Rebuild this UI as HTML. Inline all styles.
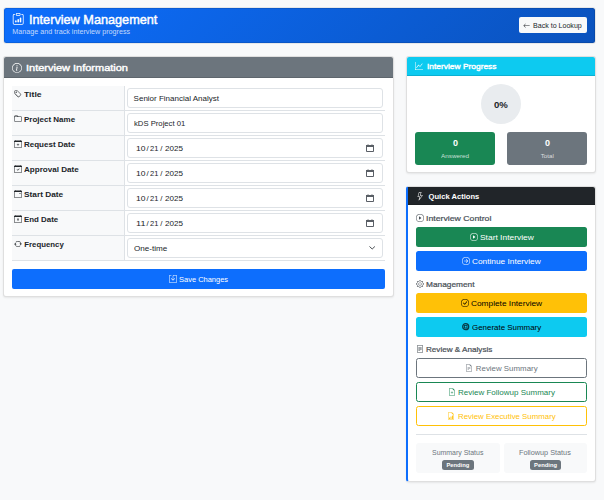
<!DOCTYPE html>
<html><head><meta charset="utf-8">
<style>
*{box-sizing:border-box;margin:0;padding:0}
html,body{width:604px;height:500px;overflow:hidden}
body{background:#f8f9fa;font-family:"Liberation Sans",sans-serif;color:#212529;position:relative}
.abs{position:absolute}
.t{position:absolute;white-space:nowrap;line-height:1;transform-origin:0 0}
svg{display:block;overflow:visible}
</style></head><body>
<div class="abs" style="left:3px;top:7px;width:593px;height:37px;background:rgba(0,0,0,.07);border-radius:3.5px"></div>
<div class="abs" style="left:4px;top:8px;width:591px;height:35px;border-radius:2.5px;background:linear-gradient(135deg,#0d6efd 0%,#0a52bd 100%);box-shadow:inset 0 0 0 1px rgba(0,0,0,.1)"></div>
<svg class="abs" style="left:11.7px;top:13px" width="12.4" height="11.8" viewBox="0 0 16 16" preserveAspectRatio="none"><path fill="#fff" d="M4 11a1 1 0 1 1 2 0v1a1 1 0 1 1-2 0zm6-4a1 1 0 1 1 2 0v5a1 1 0 1 1-2 0zM7 9a1 1 0 0 1 2 0v3a1 1 0 1 1-2 0zM4 1.5H3a2 2 0 0 0-2 2V14a2 2 0 0 0 2 2h10a2 2 0 0 0 2-2V3.5a2 2 0 0 0-2-2h-1v1h1a1 1 0 0 1 1 1V14a1 1 0 0 1-1 1H3a1 1 0 0 1-1-1V3.5a1 1 0 0 1 1-1h1zM9.5 1a.5.5 0 0 1 .5.5v1a.5.5 0 0 1-.5.5h-3a.5.5 0 0 1-.5-.5v-1a.5.5 0 0 1 .5-.5zm-3-1A1.5 1.5 0 0 0 5 1.5v1A1.5 1.5 0 0 0 6.5 4h3A1.5 1.5 0 0 0 11 2.5v-1A1.5 1.5 0 0 0 9.5 0z"/></svg>
<div class="t" style="left:28.70px;top:13px;font-size:13px;color:#fff;transform:scaleX(0.9763);-webkit-text-stroke:.45px #fff">Interview Management</div>
<div class="t" style="left:12.30px;top:28px;font-size:7.2px;color:rgba(255,255,255,.75);">Manage and track interview progress</div>
<div class="abs" style="left:519px;top:17px;width:68px;height:16px;background:#f8f9fa;border-radius:2px"></div>
<svg class="abs" style="left:523.4px;top:21.9px;" width="7.2" height="7.2" viewBox="0 0 16 16"><path fill="#212529" d="M15 8a.5.5 0 0 0-.5-.5H2.707l3.147-3.146a.5.5 0 1 0-.708-.708l-4 4a.5.5 0 0 0 0 .708l4 4a.5.5 0 0 0 .708-.708L2.707 8.5H14.5A.5.5 0 0 0 15 8"/></svg>
<div class="t" style="left:533.20px;top:22px;font-size:7.2px;color:#212529;transform:scaleX(0.9846);">Back to Lookup</div>
<div class="abs" style="left:3px;top:56px;width:391px;height:241px;background:#fff;border:1px solid rgba(0,0,0,.125);border-radius:3px;box-shadow:0 1px 2px rgba(0,0,0,.075);"></div>
<div class="abs" style="left:4px;top:57px;width:389px;height:21px;background:#6c757d;border-bottom:1px solid rgba(0,0,0,.125);border-radius:2px 2px 0 0"></div>
<svg class="abs" style="left:12px;top:63px;" width="10" height="10" viewBox="0 0 16 16"><path fill="#fff" d="M8 15A7 7 0 1 1 8 1a7 7 0 0 1 0 14m0 1A8 8 0 1 0 8 0a8 8 0 0 0 0 16M8.93 6.588l-2.29.287-.082.38.45.083c.294.07.352.176.288.469l-.738 3.468c-.194.897.105 1.319.808 1.319.545 0 1.178-.252 1.465-.598l.088-.416c-.2.176-.492.246-.686.246-.275 0-.375-.193-.304-.533L8.93 6.588zM9 4.5a1 1 0 1 1-2 0 1 1 0 0 1 2 0"/></svg>
<div class="t" style="left:26.00px;top:63px;font-size:9.4px;color:#fff;transform:scaleX(1.1720);-webkit-text-stroke:.4px #fff">Interview Information</div>
<div class="abs" style="left:12px;top:86px;width:373px;height:175px;background:#fff"></div>
<div class="abs" style="left:12px;top:86px;width:112px;height:24px;background:#f8f9fa"></div>
<div class="abs" style="left:12px;top:110px;width:373px;height:1px;background:#dee2e6"></div>
<div class="abs" style="left:12px;top:111px;width:112px;height:24px;background:#f8f9fa"></div>
<div class="abs" style="left:12px;top:135px;width:373px;height:1px;background:#dee2e6"></div>
<div class="abs" style="left:12px;top:136px;width:112px;height:24px;background:#f8f9fa"></div>
<div class="abs" style="left:12px;top:160px;width:373px;height:1px;background:#dee2e6"></div>
<div class="abs" style="left:12px;top:161px;width:112px;height:24px;background:#f8f9fa"></div>
<div class="abs" style="left:12px;top:185px;width:373px;height:1px;background:#dee2e6"></div>
<div class="abs" style="left:12px;top:186px;width:112px;height:24px;background:#f8f9fa"></div>
<div class="abs" style="left:12px;top:210px;width:373px;height:1px;background:#dee2e6"></div>
<div class="abs" style="left:12px;top:211px;width:112px;height:24px;background:#f8f9fa"></div>
<div class="abs" style="left:12px;top:235px;width:373px;height:1px;background:#dee2e6"></div>
<div class="abs" style="left:12px;top:236px;width:112px;height:24px;background:#f8f9fa"></div>
<div class="abs" style="left:12px;top:260px;width:373px;height:1px;background:#dee2e6"></div>
<div class="abs" style="left:124px;top:86px;width:1px;height:175px;background:#dee2e6"></div>
<svg class="abs" style="left:14px;top:90px;" width="8" height="8" viewBox="0 0 16 16"><path fill="#212529" d="M6 4.5a1.5 1.5 0 1 1-3 0 1.5 1.5 0 0 1 3 0m-1 0a.5.5 0 1 0-1 0 .5.5 0 0 0 1 0M2 1h4.586a1 1 0 0 1 .707.293l7 7a1 1 0 0 1 0 1.414l-4.586 4.586a1 1 0 0 1-1.414 0l-7-7A1 1 0 0 1 1 6.586V2a1 1 0 0 1 1-1m0 5.586 7 7L13.586 9l-7-7H2z"/></svg>
<div class="t" style="left:24.30px;top:91px;font-size:7.8px;font-weight:bold;color:#212529;transform:scaleX(1.1076);">Title</div>
<svg class="abs" style="left:14px;top:115px;" width="8" height="8" viewBox="0 0 16 16"><path fill="#212529" d="M.54 3.87.5 3a2 2 0 0 1 2-2h3.672a2 2 0 0 1 1.414.586l.828.828A2 2 0 0 0 9.828 3h3.982a2 2 0 0 1 1.992 2.181l-.637 7A2 2 0 0 1 13.174 14H2.826a2 2 0 0 1-1.991-1.819l-.637-7a2 2 0 0 1 .342-1.31zM2.19 4a1 1 0 0 0-.996 1.09l.637 7a1 1 0 0 0 .995.91h10.348a1 1 0 0 0 .995-.91l.637-7A1 1 0 0 0 13.81 4zm4.69-1.707A1 1 0 0 0 6.172 2H2.5a1 1 0 0 0-1 .981l.006.139q.323-.119.684-.12h5.396z"/></svg>
<div class="t" style="left:24.30px;top:116px;font-size:7.8px;font-weight:bold;color:#212529;transform:scaleX(1.0252);">Project Name</div>
<svg class="abs" style="left:14px;top:140px;" width="8" height="8" viewBox="0 0 16 16"><path fill="#212529" d="M8 7a.5.5 0 0 1 .5.5V9H10a.5.5 0 0 1 0 1H8.5v1.5a.5.5 0 0 1-1 0V10H6a.5.5 0 0 1 0-1h1.5V7.5A.5.5 0 0 1 8 7M3.5 0a.5.5 0 0 1 .5.5V1h8V.5a.5.5 0 0 1 1 0V1h1a2 2 0 0 1 2 2v11a2 2 0 0 1-2 2H2a2 2 0 0 1-2-2V3a2 2 0 0 1 2-2h1V.5a.5.5 0 0 1 .5-.5M1 4v10a1 1 0 0 0 1 1h12a1 1 0 0 0 1-1V4z"/></svg>
<div class="t" style="left:24.30px;top:141px;font-size:7.8px;font-weight:bold;color:#212529;transform:scaleX(1.0255);">Request Date</div>
<svg class="abs" style="left:14px;top:165px;" width="8" height="8" viewBox="0 0 16 16"><path fill="#212529" d="M10.854 7.146a.5.5 0 0 1 0 .708l-3 3a.5.5 0 0 1-.708 0l-1.5-1.5a.5.5 0 1 1 .708-.708L7.5 9.793l2.646-2.647a.5.5 0 0 1 .708 0M3.5 0a.5.5 0 0 1 .5.5V1h8V.5a.5.5 0 0 1 1 0V1h1a2 2 0 0 1 2 2v11a2 2 0 0 1-2 2H2a2 2 0 0 1-2-2V3a2 2 0 0 1 2-2h1V.5a.5.5 0 0 1 .5-.5M1 4v10a1 1 0 0 0 1 1h12a1 1 0 0 0 1-1V4z"/></svg>
<div class="t" style="left:24.30px;top:166px;font-size:7.8px;font-weight:bold;color:#212529;transform:scaleX(1.0367);">Approval Date</div>
<svg class="abs" style="left:14px;top:190px;" width="8" height="8" viewBox="0 0 16 16"><path fill="#212529" d="M11 6.5a.5.5 0 0 1 .5-.5h1a.5.5 0 0 1 .5.5v1a.5.5 0 0 1-.5.5h-1a.5.5 0 0 1-.5-.5zM3.5 0a.5.5 0 0 1 .5.5V1h8V.5a.5.5 0 0 1 1 0V1h1a2 2 0 0 1 2 2v11a2 2 0 0 1-2 2H2a2 2 0 0 1-2-2V3a2 2 0 0 1 2-2h1V.5a.5.5 0 0 1 .5-.5M1 4v10a1 1 0 0 0 1 1h12a1 1 0 0 0 1-1V4z"/></svg>
<div class="t" style="left:24.30px;top:191px;font-size:7.8px;font-weight:bold;color:#212529;transform:scaleX(1.0640);">Start Date</div>
<svg class="abs" style="left:14px;top:215px;" width="8" height="8" viewBox="0 0 16 16"><path fill="#212529" d="M6.146 7.146a.5.5 0 0 1 .708 0L8 8.293l1.146-1.147a.5.5 0 1 1 .708.708L8.707 9l1.147 1.146a.5.5 0 0 1-.708.708L8 9.707l-1.146 1.147a.5.5 0 0 1-.708-.708L7.293 9 6.146 7.854a.5.5 0 0 1 0-.708M3.5 0a.5.5 0 0 1 .5.5V1h8V.5a.5.5 0 0 1 1 0V1h1a2 2 0 0 1 2 2v11a2 2 0 0 1-2 2H2a2 2 0 0 1-2-2V3a2 2 0 0 1 2-2h1V.5a.5.5 0 0 1 .5-.5M1 4v10a1 1 0 0 0 1 1h12a1 1 0 0 0 1-1V4z"/></svg>
<div class="t" style="left:24.30px;top:216px;font-size:7.8px;font-weight:bold;color:#212529;transform:scaleX(1.0119);">End Date</div>
<svg class="abs" style="left:14px;top:240px;" width="8" height="8" viewBox="0 0 16 16"><path fill="#212529" d="M11.534 7h3.932a.25.25 0 0 1 .192.41l-1.966 2.36a.25.25 0 0 1-.384 0l-1.966-2.36a.25.25 0 0 1 .192-.41m-11 2h3.932a.25.25 0 0 0 .192-.41L2.692 6.23a.25.25 0 0 0-.384 0L.342 8.59A.25.25 0 0 0 .534 9M8 3c-1.552 0-2.94.707-3.857 1.818a.5.5 0 1 1-.771-.636A6.002 6.002 0 0 1 13.917 7H12.9A5 5 0 0 0 8 3M3.1 9a5.002 5.002 0 0 0 8.757 2.182.5.5 0 1 1 .771.636A6.002 6.002 0 0 1 2.083 9z"/></svg>
<div class="t" style="left:24.30px;top:241px;font-size:7.8px;font-weight:bold;color:#212529;">Frequency</div>
<div class="abs" style="left:127px;top:88px;width:256px;height:20px;background:#fff;border:1px solid #dee2e6;border-radius:3px"></div>
<div class="t" style="left:133.60px;top:95px;font-size:8px;color:#212529;">Senior Financial Analyst</div>
<div class="abs" style="left:127px;top:113px;width:256px;height:20px;background:#fff;border:1px solid #dee2e6;border-radius:3px"></div>
<div class="t" style="left:133.80px;top:120px;font-size:8px;color:#212529;transform:scaleX(0.9614);">kDS Project 01</div>
<div class="abs" style="left:127px;top:138px;width:256px;height:20px;background:#fff;border:1px solid #dee2e6;border-radius:3px"></div>
<div class="t" style="left:135.50px;top:145px;font-size:7.8px;color:#212529;transform:scaleX(1.0935);">10</div>
<div class="t" style="left:146.41px;top:145px;font-size:7.8px;color:#212529;">/</div>
<div class="t" style="left:150.00px;top:145px;font-size:7.8px;color:#212529;transform:scaleX(0.9669);">21</div>
<div class="t" style="left:160.31px;top:145px;font-size:7.8px;color:#212529;">/</div>
<div class="t" style="left:164.90px;top:145px;font-size:7.8px;color:#212529;transform:scaleX(1.0369);">2025</div>
<svg class="abs" style="left:366px;top:144px;" width="8" height="8" viewBox="0 0 8 8"><g fill="#5a5f66"><rect x="0" y="1" width="8" height="2"/><rect x="0" y="3" width="1" height="4.6"/><rect x="7" y="3" width="1" height="4.6"/><rect x="0.6" y="7" width="6.8" height="1"/><rect x="1.4" y="0.2" width="1.3" height="1" opacity=".6"/><rect x="5.3" y="0.2" width="1.3" height="1" opacity=".6"/></g></svg>
<div class="abs" style="left:127px;top:163px;width:256px;height:20px;background:#fff;border:1px solid #dee2e6;border-radius:3px"></div>
<div class="t" style="left:135.50px;top:170px;font-size:7.8px;color:#212529;transform:scaleX(1.0935);">10</div>
<div class="t" style="left:146.41px;top:170px;font-size:7.8px;color:#212529;">/</div>
<div class="t" style="left:150.00px;top:170px;font-size:7.8px;color:#212529;transform:scaleX(0.9669);">21</div>
<div class="t" style="left:160.31px;top:170px;font-size:7.8px;color:#212529;">/</div>
<div class="t" style="left:164.90px;top:170px;font-size:7.8px;color:#212529;transform:scaleX(1.0369);">2025</div>
<svg class="abs" style="left:366px;top:169px;" width="8" height="8" viewBox="0 0 8 8"><g fill="#5a5f66"><rect x="0" y="1" width="8" height="2"/><rect x="0" y="3" width="1" height="4.6"/><rect x="7" y="3" width="1" height="4.6"/><rect x="0.6" y="7" width="6.8" height="1"/><rect x="1.4" y="0.2" width="1.3" height="1" opacity=".6"/><rect x="5.3" y="0.2" width="1.3" height="1" opacity=".6"/></g></svg>
<div class="abs" style="left:127px;top:188px;width:256px;height:20px;background:#fff;border:1px solid #dee2e6;border-radius:3px"></div>
<div class="t" style="left:135.50px;top:195px;font-size:7.8px;color:#212529;transform:scaleX(1.0935);">10</div>
<div class="t" style="left:146.41px;top:195px;font-size:7.8px;color:#212529;">/</div>
<div class="t" style="left:150.00px;top:195px;font-size:7.8px;color:#212529;transform:scaleX(0.9669);">21</div>
<div class="t" style="left:160.31px;top:195px;font-size:7.8px;color:#212529;">/</div>
<div class="t" style="left:164.90px;top:195px;font-size:7.8px;color:#212529;transform:scaleX(1.0369);">2025</div>
<svg class="abs" style="left:366px;top:194px;" width="8" height="8" viewBox="0 0 8 8"><g fill="#5a5f66"><rect x="0" y="1" width="8" height="2"/><rect x="0" y="3" width="1" height="4.6"/><rect x="7" y="3" width="1" height="4.6"/><rect x="0.6" y="7" width="6.8" height="1"/><rect x="1.4" y="0.2" width="1.3" height="1" opacity=".6"/><rect x="5.3" y="0.2" width="1.3" height="1" opacity=".6"/></g></svg>
<div class="abs" style="left:127px;top:213px;width:256px;height:20px;background:#fff;border:1px solid #dee2e6;border-radius:3px"></div>
<div class="t" style="left:135.50px;top:220px;font-size:7.8px;color:#212529;transform:scaleX(1.1737);">11</div>
<div class="t" style="left:146.41px;top:220px;font-size:7.8px;color:#212529;">/</div>
<div class="t" style="left:150.00px;top:220px;font-size:7.8px;color:#212529;transform:scaleX(0.9669);">21</div>
<div class="t" style="left:160.31px;top:220px;font-size:7.8px;color:#212529;">/</div>
<div class="t" style="left:164.90px;top:220px;font-size:7.8px;color:#212529;transform:scaleX(1.0369);">2025</div>
<svg class="abs" style="left:366px;top:219px;" width="8" height="8" viewBox="0 0 8 8"><g fill="#5a5f66"><rect x="0" y="1" width="8" height="2"/><rect x="0" y="3" width="1" height="4.6"/><rect x="7" y="3" width="1" height="4.6"/><rect x="0.6" y="7" width="6.8" height="1"/><rect x="1.4" y="0.2" width="1.3" height="1" opacity=".6"/><rect x="5.3" y="0.2" width="1.3" height="1" opacity=".6"/></g></svg>
<div class="abs" style="left:127px;top:238px;width:256px;height:20px;background:#fff;border:1px solid #dee2e6;border-radius:3px"></div>
<div class="t" style="left:133.75px;top:245px;font-size:8px;color:#212529;transform:scaleX(1.0104);">One-time</div>
<svg class="abs" style="left:368.8px;top:245.8px;" width="6.4" height="3.6" viewBox="0 0 6.4 3.6"><path d="M0.5 0.5L3.2 3 5.9 0.5" fill="none" stroke="#343a40" stroke-width=".9"/></svg>
<div class="abs" style="left:12px;top:269px;width:373px;height:20px;background:#0d6efd;border-radius:2px"></div>
<svg class="abs" style="left:169px;top:275px;" width="8" height="8" viewBox="0 0 16 16"><path fill="#fff" d="M2 1a1 1 0 0 0-1 1v12a1 1 0 0 0 1 1h12a1 1 0 0 0 1-1V2a1 1 0 0 0-1-1H9.5a1 1 0 0 0-1 1v7.293l2.646-2.647a.5.5 0 0 1 .708.708l-3.5 3.5a.5.5 0 0 1-.708 0l-3.5-3.5a.5.5 0 1 1 .708-.708L7.5 9.293V2a2 2 0 0 1 2-2H14a2 2 0 0 1 2 2v12a2 2 0 0 1-2 2H2a2 2 0 0 1-2-2V2a2 2 0 0 1 2-2h2.5a.5.5 0 0 1 0 1z"/></svg>
<div class="t" style="left:179.10px;top:276px;font-size:7.2px;color:#fff;transform:scaleX(1.0412);">Save Changes</div>
<div class="abs" style="left:406px;top:56px;width:190px;height:117px;background:#fff;border:1px solid rgba(0,0,0,.125);border-radius:3px;box-shadow:0 1px 2px rgba(0,0,0,.075);"></div>
<div class="abs" style="left:407px;top:57px;width:188px;height:19px;background:#0dcaf0;border-bottom:1px solid rgba(0,0,0,.125);border-radius:2px 2px 0 0"></div>
<svg class="abs" style="left:415px;top:62px;" width="8" height="8" viewBox="0 0 16 16"><path fill="#fff" d="M0 0h1v15h15v1H0zm14.817 3.113a.5.5 0 0 1 .07.704l-4.5 5.5a.5.5 0 0 1-.74.037L7.06 6.767l-3.656 5.027a.5.5 0 0 1-.808-.588l4-5.5a.5.5 0 0 1 .758-.06l2.609 2.61 4.15-5.073a.5.5 0 0 1 .704-.07"/></svg>
<div class="t" style="left:427.40px;top:63px;font-size:7.9px;color:#fff;transform:scaleX(1.0636);-webkit-text-stroke:.38px #fff">Interview Progress</div>
<div class="abs" style="left:481px;top:84px;width:40px;height:40px;background:#e9ecef;border-radius:50%"></div>
<div class="t" style="left:493.90px;top:101px;font-size:9.3px;font-weight:bold;color:#212529;transform:scaleX(1.0344);">0%</div>
<div class="abs" style="left:415px;top:132px;width:80px;height:33px;background:#198754;border-radius:3px"></div>
<div class="abs" style="left:507px;top:132px;width:80px;height:33px;background:#6c757d;border-radius:3px"></div>
<div class="t" style="left:452.94px;top:139px;font-size:9px;font-weight:bold;color:#fff;">0</div>
<div class="t" style="left:544.94px;top:139px;font-size:9px;font-weight:bold;color:#fff;">0</div>
<div class="t" style="left:441.20px;top:153px;font-size:6.2px;color:rgba(255,255,255,.75);transform:scaleX(1.0212);">Answered</div>
<div class="t" style="left:540.71px;top:153px;font-size:6.2px;color:rgba(255,255,255,.75);">Total</div>
<div class="abs" style="left:406px;top:186px;width:190px;height:296px;background:#fff;border:1px solid rgba(0,0,0,.125);border-left:2px solid #0d6efd;border-radius:3px;box-shadow:0 1px 2px rgba(0,0,0,.075);"></div>
<div class="abs" style="left:408px;top:187px;width:187px;height:18px;background:#212529;border-bottom:1px solid rgba(0,0,0,.125);border-radius:0 2px 0 0"></div>
<svg class="abs" style="left:415.5px;top:191.7px;" width="8.4" height="8.4" viewBox="0 0 16 16"><path fill="#fff" d="M5.52.359A.5.5 0 0 1 6 0h4a.5.5 0 0 1 .474.658L8.694 6H12.5a.5.5 0 0 1 .395.807l-7 9a.5.5 0 0 1-.873-.454L6.823 9.5H3.5a.5.5 0 0 1-.48-.641zM6.374 1 4.168 8.5H7.5a.5.5 0 0 1 .478.647L6.78 13.04 11.478 7H8a.5.5 0 0 1-.474-.658L9.306 1z"/></svg>
<div class="t" style="left:428.50px;top:193px;font-size:7.6px;font-weight:bold;color:#fff;">Quick Actions</div>
<svg class="abs" style="left:416px;top:214px;" width="8" height="8" viewBox="0 0 16 16"><path fill="#495057" d="M8 15A7 7 0 1 1 8 1a7 7 0 0 1 0 14m0 1A8 8 0 1 0 8 0a8 8 0 0 0 0 16M6.271 5.055a.5.5 0 0 1 .52.038l3.5 2.5a.5.5 0 0 1 0 .814l-3.5 2.5A.5.5 0 0 1 6 10.5v-5a.5.5 0 0 1 .271-.445"/></svg>
<div class="t" style="left:426.10px;top:215px;font-size:8px;color:#495057;transform:scaleX(1.0894);-webkit-text-stroke:.22px #495057">Interview Control</div>
<svg class="abs" style="left:416px;top:280px;" width="8" height="8" viewBox="0 0 16 16"><path fill="#495057" d="M8 4.754a3.246 3.246 0 1 0 0 6.492 3.246 3.246 0 0 0 0-6.492M5.754 8a2.246 2.246 0 1 1 4.492 0 2.246 2.246 0 0 1-4.492 0M9.796 1.343c-.527-1.79-3.065-1.79-3.592 0l-.094.319a.873.873 0 0 1-1.255.52l-.292-.16c-1.64-.892-3.433.902-2.54 2.541l.159.292a.873.873 0 0 1-.52 1.255l-.319.094c-1.79.527-1.79 3.065 0 3.592l.319.094a.873.873 0 0 1 .52 1.255l-.16.292c-.892 1.64.901 3.434 2.541 2.54l.292-.159a.873.873 0 0 1 1.255.52l.094.319c.527 1.79 3.065 1.79 3.592 0l.094-.319a.873.873 0 0 1 1.255-.52l.292.16c1.64.893 3.434-.902 2.54-2.541l-.159-.292a.873.873 0 0 1 .52-1.255l.319-.094c1.79-.527 1.79-3.065 0-3.592l-.319-.094a.873.873 0 0 1-.52-1.255l.16-.292c.893-1.64-.902-3.433-2.541-2.54l-.292.159a.873.873 0 0 1-1.255-.52zm-2.633.283c.246-.835 1.428-.835 1.674 0l.094.319a1.873 1.873 0 0 0 2.693 1.115l.291-.16c.764-.415 1.6.42 1.184 1.185l-.159.292a1.873 1.873 0 0 0 1.116 2.692l.318.094c.835.246.835 1.428 0 1.674l-.319.094a1.873 1.873 0 0 0-1.115 2.693l.16.291c.415.764-.42 1.6-1.185 1.184l-.291-.159a1.873 1.873 0 0 0-2.693 1.116l-.094.318c-.246.835-1.428.835-1.674 0l-.094-.319a1.873 1.873 0 0 0-2.692-1.115l-.292.16c-.764.415-1.6-.42-1.184-1.185l.159-.291A1.873 1.873 0 0 0 1.945 8.93l-.319-.094c-.835-.246-.835-1.428 0-1.674l.319-.094A1.873 1.873 0 0 0 3.06 4.377l-.16-.292c-.415-.764.42-1.6 1.185-1.184l.292.159a1.873 1.873 0 0 0 2.692-1.115z"/></svg>
<div class="t" style="left:426.10px;top:281px;font-size:8px;color:#495057;transform:scaleX(1.0385);-webkit-text-stroke:.22px #495057">Management</div>
<svg class="abs" style="left:416px;top:344.8px;" width="8" height="8" viewBox="0 0 16 16"><path fill="#495057" d="M5 4a.5.5 0 0 0 0 1h6a.5.5 0 0 0 0-1zm-.5 2.5A.5.5 0 0 1 5 6h6a.5.5 0 0 1 0 1H5a.5.5 0 0 1-.5-.5M5 8a.5.5 0 0 0 0 1h6a.5.5 0 0 0 0-1zm0 2a.5.5 0 0 0 0 1h3a.5.5 0 0 0 0-1zM2 2a2 2 0 0 1 2-2h8a2 2 0 0 1 2 2v12a2 2 0 0 1-2 2H4a2 2 0 0 1-2-2zm10-1H4a1 1 0 0 0-1 1v12a1 1 0 0 0 1 1h8a1 1 0 0 0 1-1V2a1 1 0 0 0-1-1"/></svg>
<div class="t" style="left:426.10px;top:346px;font-size:8px;color:#495057;transform:scaleX(1.0144);-webkit-text-stroke:.22px #495057">Review &amp; Analysis</div>
<div class="abs" style="left:416px;top:227px;width:171px;height:20px;background:#198754;border-radius:2.5px"></div>
<svg class="abs" style="left:469.5px;top:233px;" width="8" height="8" viewBox="0 0 16 16"><path fill="#fff" d="M8 15A7 7 0 1 1 8 1a7 7 0 0 1 0 14m0 1A8 8 0 1 0 8 0a8 8 0 0 0 0 16M6.271 5.055a.5.5 0 0 1 .52.038l3.5 2.5a.5.5 0 0 1 0 .814l-3.5 2.5A.5.5 0 0 1 6 10.5v-5a.5.5 0 0 1 .271-.445"/></svg>
<div class="t" style="left:479.90px;top:234px;font-size:8px;color:#fff;transform:scaleX(1.0520);">Start Interview</div>
<div class="abs" style="left:416px;top:251px;width:171px;height:20px;background:#0d6efd;border-radius:2.5px"></div>
<svg class="abs" style="left:462.2px;top:256.8px;" width="8" height="8" viewBox="0 0 16 16"><path fill="#fff" d="M1 8a7 7 0 1 0 14 0A7 7 0 0 0 1 8m15 0A8 8 0 1 1 0 8a8 8 0 0 1 16 0M4.5 7.5a.5.5 0 0 0 0 1h5.793l-2.147 2.146a.5.5 0 0 0 .708.708l3-3a.5.5 0 0 0 0-.708l-3-3a.5.5 0 1 0-.708.708L10.293 7.5z"/></svg>
<div class="t" style="left:472.40px;top:258px;font-size:8px;color:#fff;transform:scaleX(1.0367);">Continue Interview</div>
<div class="abs" style="left:416px;top:293px;width:171px;height:20px;background:#ffc107;border-radius:2.5px"></div>
<svg class="abs" style="left:461px;top:298.8px;" width="8" height="8" viewBox="0 0 16 16"><path fill="#000" d="M8 15A7 7 0 1 1 8 1a7 7 0 0 1 0 14m0 1A8 8 0 1 0 8 0a8 8 0 0 0 0 16M10.97 4.97l-.02.022-3.473 4.425-2.093-2.094a.75.75 0 0 0-1.06 1.06L6.97 11.03a.75.75 0 0 0 1.079-.02l3.992-4.99a.75.75 0 0 0-1.071-1.05"/></svg>
<div class="t" style="left:471.20px;top:300px;font-size:8px;color:#000;transform:scaleX(1.0382);">Complete Interview</div>
<div class="abs" style="left:416px;top:317px;width:171px;height:20px;background:#0dcaf0;border-radius:2.5px"></div>
<svg class="abs" style="left:461.8px;top:323px;" width="7.4" height="7.4" viewBox="0 0 7.4 7.4"><circle cx="3.7" cy="3.7" r="3.0" fill="none" stroke="#073b47" stroke-width="1.3"/><rect x="2.4" y="2.4" width="2.6" height="2.6" fill="none" stroke="#073b47" stroke-width=".9"/></svg>
<div class="t" style="left:471.90px;top:324px;font-size:8px;color:#000;transform:scaleX(0.9912);">Generate Summary</div>
<div class="abs" style="left:416px;top:358px;width:171px;height:20px;border:1px solid #6c757d;border-radius:2.5px"></div>
<svg class="abs" style="left:465px;top:364px;opacity:.9" width="8" height="8" viewBox="0 0 16 16"><path fill="#6c757d" d="M5.5 7a.5.5 0 0 0 0 1h5a.5.5 0 0 0 0-1zM5 9.5a.5.5 0 0 1 .5-.5h5a.5.5 0 0 1 0 1h-5a.5.5 0 0 1-.5-.5m0 2a.5.5 0 0 1 .5-.5h2a.5.5 0 0 1 0 1h-2a.5.5 0 0 1-.5-.5M9.5 0H4a2 2 0 0 0-2 2v12a2 2 0 0 0 2 2h8a2 2 0 0 0 2-2V4.5zm0 1v2A1.5 1.5 0 0 0 11 4.5h2V14a1 1 0 0 1-1 1H4a1 1 0 0 1-1-1V2a1 1 0 0 1 1-1z"/></svg>
<div class="t" style="left:475.80px;top:365px;font-size:7.9px;color:#6c757d;">Review Summary</div>
<div class="abs" style="left:416px;top:382px;width:171px;height:20px;border:1px solid #198754;border-radius:2.5px"></div>
<svg class="abs" style="left:448px;top:388px;opacity:.9" width="8" height="8" viewBox="0 0 16 16"><path fill="#198754" d="M8 6.5a.5.5 0 0 1 .5.5v1.5H10a.5.5 0 0 1 0 1H8.5V11a.5.5 0 0 1-1 0V9.5H6a.5.5 0 0 1 0-1h1.5V7a.5.5 0 0 1 .5-.5M14 4.5V14a2 2 0 0 1-2 2H4a2 2 0 0 1-2-2V2a2 2 0 0 1 2-2h5.5zm-3 0A1.5 1.5 0 0 1 9.5 3V1H4a1 1 0 0 0-1 1v12a1 1 0 0 0 1 1h8a1 1 0 0 0 1-1V4.5z"/></svg>
<div class="t" style="left:458.30px;top:389px;font-size:7.9px;color:#198754;transform:scaleX(1.0137);">Review Followup Summary</div>
<div class="abs" style="left:416px;top:406px;width:171px;height:20px;border:1px solid #ffc107;border-radius:2.5px"></div>
<svg class="abs" style="left:447px;top:412px;opacity:.9" width="8" height="8" viewBox="0 0 16 16"><path fill="#ffc107" d="M10 13.5a.5.5 0 0 0 .5.5h1a.5.5 0 0 0 .5-.5v-6a.5.5 0 0 0-.5-.5h-1a.5.5 0 0 0-.5.5zm-2.5.5a.5.5 0 0 1-.5-.5v-4a.5.5 0 0 1 .5-.5h1a.5.5 0 0 1 .5.5v4a.5.5 0 0 1-.5.5zm-3 0a.5.5 0 0 1-.5-.5v-2a.5.5 0 0 1 .5-.5h1a.5.5 0 0 1 .5.5v2a.5.5 0 0 1-.5.5zM14 14V4.5L9.5 0H4a2 2 0 0 0-2 2v12a2 2 0 0 0 2 2h8a2 2 0 0 0 2-2M9.5 3A1.5 1.5 0 0 0 11 4.5h2V14a1 1 0 0 1-1 1H4a1 1 0 0 1-1-1V2a1 1 0 0 1 1-1h5.5z"/></svg>
<div class="t" style="left:457.90px;top:413px;font-size:7.9px;color:#ffc107;transform:scaleX(0.9946);">Review Executive Summary</div>
<div class="abs" style="left:416px;top:434px;width:171px;height:1px;background:#dee2e6"></div>
<div class="abs" style="left:416px;top:443px;width:84px;height:30px;background:#f8f9fa;border-radius:3px"></div>
<div class="abs" style="left:504px;top:443px;width:83px;height:30px;background:#f8f9fa;border-radius:3px"></div>
<div class="t" style="left:432.20px;top:449px;font-size:7.2px;color:#6c757d;transform:scaleX(0.9675);">Summary Status</div>
<div class="t" style="left:519.30px;top:449px;font-size:7.2px;color:#6c757d;transform:scaleX(1.0129);">Followup Status</div>
<div class="abs" style="left:442px;top:460px;width:32px;height:10px;background:#6c757d;border-radius:2.5px"></div>
<div class="abs" style="left:530px;top:460px;width:31px;height:10px;background:#6c757d;border-radius:2.5px"></div>
<div class="t" style="left:446.40px;top:463px;font-size:5.8px;font-weight:bold;color:#fff;">Pending</div>
<div class="t" style="left:534.10px;top:463px;font-size:5.8px;font-weight:bold;color:#fff;">Pending</div>
</body></html>
